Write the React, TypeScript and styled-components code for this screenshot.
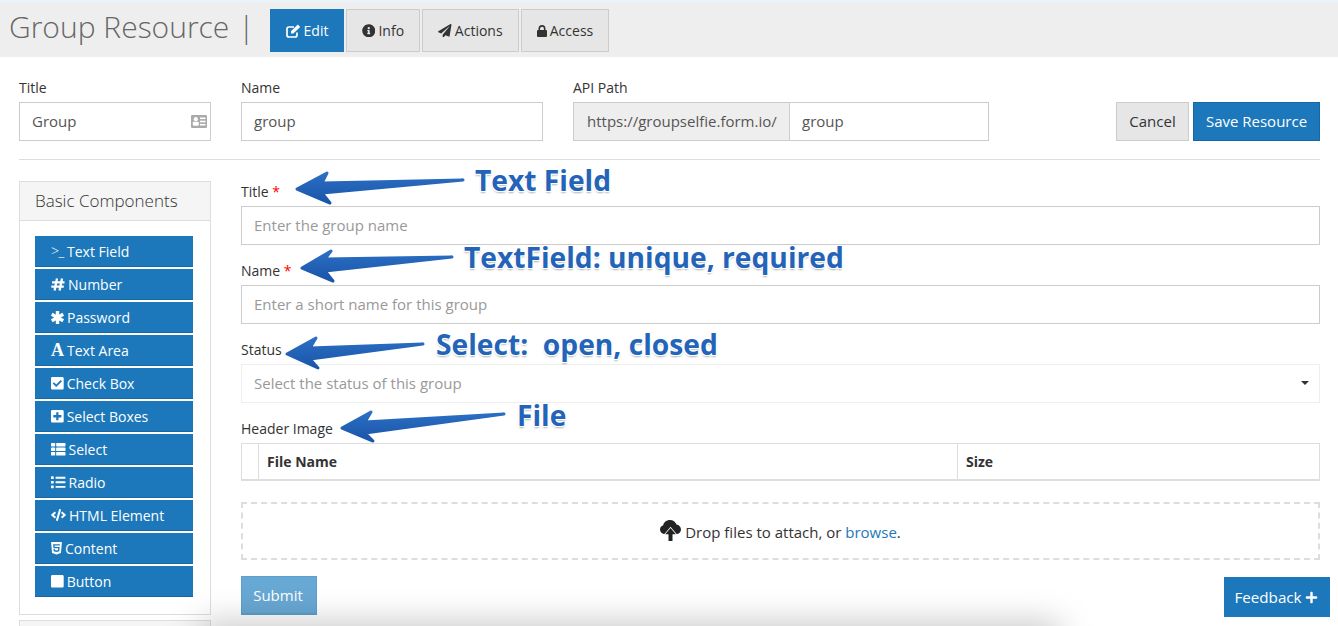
import React from "react";
import styled, { createGlobalStyle } from "styled-components";
import {
  FaInfoCircle, FaPaperPlane, FaCheckSquare, FaPlusSquare, FaThList, FaList, FaCode, FaHtml5, FaStop, FaPlus,
} from "react-icons/fa";

const Global = createGlobalStyle`
  html, body { margin: 0; padding: 0; height: 626px; overflow: hidden; background: #fff; }
  body { font-family: "Open Sans", "Liberation Sans", sans-serif; font-size: 14px; color: #333; }
  * { box-sizing: border-box; }
`;

const Page = styled.div`position: relative; width: 1338px; height: 626px; overflow: hidden;`;

const Header = styled.header`
  height: 57px; background: #eeeeee; border-top: 2px solid #e9f4f9;
  display: flex; align-items: flex-start; padding: 7px 0 0 9px;
`;
const PageTitle = styled.h1`
  margin: 0; width: 261px; height: 40px; font-size: 30px; line-height: 36px; font-weight: 300; color: #666;
  white-space: pre;
`;
const TitleBar = styled.span`margin-left: 9px; color: #666;`;
const Tabs = styled.nav`display: flex; gap: 2px;`;
const Tab = styled.a<{ $active?: boolean; $w: number }>`
  display: flex; align-items: center; justify-content: center; gap: 3px;
  width: ${(p) => p.$w}px; height: 43px; font-size: 14px;
  background: ${(p) => (p.$active ? "#1c78bb" : "#e6e6e6")};
  color: ${(p) => (p.$active ? "#fff" : "#333")};
  border: 1px solid ${(p) => (p.$active ? "#1c78bb" : "#ccc")};
  svg { font-size: 13.5px; }
`;

const Content = styled.main`padding: 22px 18px 0 19px;`;
const TopRow = styled.div`display: flex; align-items: flex-end; height: 62px;`;
const Field = styled.div<{ $w: number; $mr: number }>`width: ${(p) => p.$w}px; margin-right: ${(p) => p.$mr}px;`;
const Label = styled.label`display: block; font-size: 14px; line-height: 19px; color: #333; margin-bottom: 5px; white-space: nowrap;`;
const Star = styled.span`color: #f00;`;
const InputBox = styled.div`
  position: relative; height: 39px; border: 1px solid #ccc; background: #fff;
  display: flex; align-items: center; padding: 0 12px 2px; font-size: 15px; color: #555; white-space: nowrap;
`;
const Placeholder = styled(InputBox)`color: #999;`;
const CardIcon = styled.svg`position: absolute; right: 3px; top: 12px;`;
const InputGroup = styled.div`display: flex;`;
const Addon = styled.div`
  width: 216px; height: 39px; border: 1px solid #ccc; border-right: 0; background: #eee; color: #555;
  display: flex; align-items: center; padding: 0 13px 2px; font-size: 15px; white-space: nowrap;
`;
const GroupInput = styled(InputBox)`width: 200px;`;
const Actions = styled.div`margin-left: auto; display: flex; gap: 4px;`;
const Btn = styled.button<{ $primary?: boolean; $w: number }>`
  width: ${(p) => p.$w}px; height: 39px; padding: 0 0 2px; font: inherit; font-size: 15px;
  background: ${(p) => (p.$primary ? "#1c78bb" : "#e6e6e6")};
  color: ${(p) => (p.$primary ? "#fff" : "#333")};
  border: 1px solid ${(p) => (p.$primary ? "#1868a3" : "#ccc")};
`;
const Rule = styled.hr`margin: 18px 0 21px; border: 0; border-top: 1px solid #ddd;`;

const Columns = styled.div`display: grid; grid-template-columns: 192px 1fr; column-gap: 30px;`;
const Panel = styled.section`border: 1px solid #ddd; height: 434px;`;
const NextPanel = styled(Panel)`height: 30px; margin-top: 5px; background: #f5f5f5;`;
const PanelHead = styled.div`
  height: 39px; background: #f5f5f5; border-bottom: 1px solid #ddd; padding: 0 15px 2px;
  display: flex; align-items: center; font-size: 17px; font-weight: 300; color: #333;
`;
const PanelBody = styled.div`display: flex; flex-direction: column; gap: 2px; padding: 15px 17px 0 15px;`;
const CompBtn = styled.div`
  height: 31px; background: #1c78bb; border-bottom: 1px solid #1868a3; color: #fff; padding-left: 16px;
  display: flex; align-items: center; gap: 3px; font-size: 14px; white-space: nowrap;
  svg { font-size: 14.5px; flex: none; }
`;
const Prompt = styled.span`font-size: 14px; width: 13px; letter-spacing: -0.5px; line-height: 1; white-space: nowrap; font-weight: 300;`;
const SerifA = styled.span`font-family: "Liberation Serif", serif; font-weight: 700; font-size: 18px; line-height: 1; width: 13px;`;
const CheckIcon = styled(FaCheckSquare)`&& { width: 12.7px; }`;
const PlusBoxIcon = styled(FaPlusSquare)`&& { width: 12.7px; }`;
const StopIcon = styled(FaStop)`&& { width: 12.7px; }`;
const ShieldIcon = styled(FaHtml5)`&& { width: 11px; }`;
const CodeIcon = styled(FaCode)`&& { font-size: 12px; width: 15px; }`;

const Form = styled.div`display: flex; flex-direction: column; padding-top: 1px;`;
const FormGroup = styled.div<{ $h: number }>`height: ${(p) => p.$h}px;`;
const SelectBox = styled(Placeholder)`border-color: #eee; justify-content: space-between;`;
const Caret = styled.span`width: 0; height: 0; border-left: 4px solid transparent; border-right: 4px solid transparent; border-top: 4px solid #333; margin-right: -2px;`;
const Table = styled.table`width: 100%; height: 38px; border-collapse: collapse; border: 1px solid #ddd; border-bottom: 2px solid #ddd;`;
const Th = styled.th<{ $w: number }>`
  width: ${(p) => p.$w}px; border-right: 1px solid #ddd; padding: 0 8px; text-align: left; font-size: 14px; font-weight: 700; color: #333;
`;
const Drop = styled.div`
  margin-top: 21px; height: 58px; border: 2px dashed #ddd; display: flex; align-items: center; justify-content: center;
  gap: 4px; font-size: 15px; color: #333;
`;
const DropText = styled.span`padding-top: 2px;`;
const Browse = styled.a`color: #1c78bb;`;
const Submit = styled.button`
  margin-top: 16px; width: 76px; height: 39px; padding: 0 2px 0 0; font: inherit; font-size: 15px; color: #fff;
  background: #68a8d4; border: 1px solid #5f9fcb; border-bottom-width: 2px;
`;

const Feedback = styled.button`
  position: absolute; left: 1224px; top: 577px; width: 106px; height: 40px; padding: 0 2px 0 0; border: 0;
  background: #1c78bb; color: #fff; font: inherit; font-size: 15.2px;
  display: flex; align-items: center; justify-content: center; gap: 3px;
  svg { font-size: 13px; }
`;
const BottomShade = styled.div`
  position: absolute; left: 200px; top: 622px; width: 860px; height: 30px; background: rgba(0,0,0,.22);
  filter: blur(16px); pointer-events: none;
`;

const ArrowLayer = styled.svg`position: absolute; inset: 0; pointer-events: none;`;
const Note = styled.div<{ $x: number; $y: number }>`
  position: absolute; left: ${(p) => p.$x}px; top: ${(p) => p.$y}px; transform: translateY(-50%);
  font-size: 28.2px; line-height: 36px; font-weight: 700; color: #2364b8; white-space: pre;
  text-shadow: -1px -1px 0 #fff, 1px -1px 0 #fff, -1px 1px 0 #fff, 1px 1px 0 #fff, 0 2px 2px rgba(0,0,0,.3);
`;

const arrows = [
  "297,189 327,173 322,183 463,180 322,193 330,203",
  "302,268 331,251 325,259 452,257 325,271 333,281",
  "287,354 316,338 310,348 423,344 310,359 318,368",
  "342,428 371,412 365,422 504,414 365,433 373,441",
];

const EditIcon = () => (
  <svg width="15" height="14" viewBox="0 0 15 14" fill="none">
    <path d="M11 8.5V11a2 2 0 0 1-2 2H3a2 2 0 0 1-2-2V5a2 2 0 0 1 2-2h5" stroke="#fff" strokeWidth="1.7" />
    <path d="M5 7.2 11.8 0.6 14.2 3 7.4 9.6H5Z" fill="#fff" />
  </svg>
);
const LockIcon = () => (
  <svg width="10" height="12" viewBox="0 0 10 12">
    <rect x="0" y="5" width="10" height="7" rx="1" fill="#333" />
    <path d="M2.3 5.5V3.6a2.7 2.7 0 0 1 5.4 0v1.9" fill="none" stroke="#333" strokeWidth="1.6" />
  </svg>
);
const HashIcon = () => (
  <svg width="14" height="13" viewBox="0 0 14 13" stroke="#fff" strokeWidth="2.3">
    <path d="M6 0.5 3.6 12.5M11 0.5 8.6 12.5M1 4.3H13.5M0.3 8.7H12.8" />
  </svg>
);
const StarIcon = () => (
  <svg width="13" height="13" viewBox="0 0 13 13" stroke="#fff" strokeWidth="3.4">
    <path d="M6.5 0V13M0.8 3.2 12.2 9.8M12.2 3.2 0.8 9.8" />
  </svg>
);
const CloudIcon = () => (
  <svg width="21" height="22" viewBox="0 0 21 22">
    <path d="M5 14C2 14 0 12 0 9.5 0 7.5 1.3 5.8 3.2 5.2 3.8 2.2 6.6 0 10 0c3 0 5.5 1.8 6.5 4.6C19 5 21 7 21 9.5 21 12 19 14 16.5 14Z" fill="#222" />
    <path d="M10.5 8 5.2 14.2H8.5V21h4v-6.8h3.3Z" fill="#222" stroke="#fff" strokeWidth="1.5" paintOrder="stroke" />
  </svg>
);

const components: [React.ReactNode, string][] = [
  [<Prompt key="p">&gt;_</Prompt>, "Text Field"],
  [<HashIcon key="h" />, "Number"],
  [<StarIcon key="a" />, "Password"],
  [<SerifA key="f" aria-hidden>A</SerifA>, "Text Area"],
  [<CheckIcon key="c" />, "Check Box"],
  [<PlusBoxIcon key="s" />, "Select Boxes"],
  [<FaThList key="t" />, "Select"],
  [<FaList key="l" />, "Radio"],
  [<CodeIcon key="o" />, "HTML Element"],
  [<ShieldIcon key="5" />, "Content"],
  [<StopIcon key="b" />, "Button"],
];

export default function App() {
  return (
    <Page>
      <Global />
      <Header>
        <PageTitle>Group Resource<TitleBar>|</TitleBar></PageTitle>
        <Tabs>
          <Tab $active $w={74}><EditIcon />Edit</Tab>
          <Tab $w={74}><FaInfoCircle />Info</Tab>
          <Tab $w={97}><FaPaperPlane />Actions</Tab>
          <Tab $w={88}><LockIcon />Access</Tab>
        </Tabs>
      </Header>
      <Content>
        <TopRow>
          <Field $w={192} $mr={30}>
            <Label>Title</Label>
            <InputBox>
              Group
              <CardIcon width="16" height="13" viewBox="0 0 16 13">
                <rect width="16" height="13" rx="1.2" fill="#aaa" />
                <rect x="9" y="2.5" width="5.5" height="1.6" fill="#fff" />
                <rect x="9" y="5.7" width="5.5" height="1.6" fill="#fff" />
                <rect x="9" y="8.9" width="5.5" height="1.6" fill="#fff" />
                <circle cx="4.8" cy="4.2" r="2.1" fill="#fff" />
                <rect x="1.8" y="6.8" width="6" height="4" rx="1" fill="#fff" />
              </CardIcon>
            </InputBox>
          </Field>
          <Field $w={302} $mr={30}>
            <Label>Name</Label>
            <InputBox>group</InputBox>
          </Field>
          <Field $w={416} $mr={0}>
            <Label>API Path</Label>
            <InputGroup>
              <Addon>https://groupselfie.form.io/</Addon>
              <GroupInput>group</GroupInput>
            </InputGroup>
          </Field>
          <Actions>
            <Btn $w={73}>Cancel</Btn>
            <Btn $primary $w={127}>Save Resource</Btn>
          </Actions>
        </TopRow>
        <Rule />
        <Columns>
          <div>
            <Panel>
              <PanelHead>Basic Components</PanelHead>
              <PanelBody>
                {components.map(([icon, text]) => (
                  <CompBtn key={text}>{icon}{text}</CompBtn>
                ))}
              </PanelBody>
            </Panel>
            <NextPanel />
          </div>
          <Form>
            <FormGroup $h={79}>
              <Label>Title <Star>*</Star></Label>
              <Placeholder>Enter the group name</Placeholder>
            </FormGroup>
            <FormGroup $h={79}>
              <Label>Name <Star>*</Star></Label>
              <Placeholder>Enter a short name for this group</Placeholder>
            </FormGroup>
            <FormGroup $h={79}>
              <Label>Status</Label>
              <SelectBox>Select the status of this group<Caret /></SelectBox>
            </FormGroup>
            <Label>Header Image</Label>
            <Table>
              <thead>
                <tr>
                  <Th $w={17} />
                  <Th $w={699}>File Name</Th>
                  <Th $w={362}>Size</Th>
                </tr>
              </thead>
            </Table>
            <Drop><CloudIcon /><DropText>Drop files to attach, or <Browse>browse</Browse>.</DropText></Drop>
            <Submit>Submit</Submit>
          </Form>
        </Columns>
      </Content>
      <BottomShade />
      <Feedback>Feedback<FaPlus /></Feedback>
      <ArrowLayer width="1338" height="626" viewBox="0 0 1338 626">
        <defs>
          <linearGradient id="arrowFill" x1="0" y1="0" x2="0" y2="1">
            <stop offset="0" stopColor="#2b6fc4" />
            <stop offset="1" stopColor="#1a55a8" />
          </linearGradient>
        </defs>
        {arrows.map((pts) => (
          <polygon key={pts} points={pts} fill="url(#arrowFill)" stroke="url(#arrowFill)" strokeWidth="3" strokeLinejoin="round" />
        ))}
      </ArrowLayer>
      <Note $x={475} $y={180}>Text Field</Note>
      <Note $x={464} $y={257}>TextField: unique, required</Note>
      <Note $x={436} $y={344}>Select:  open, closed</Note>
      <Note $x={517} $y={415}>File</Note>
    </Page>
  );
}
